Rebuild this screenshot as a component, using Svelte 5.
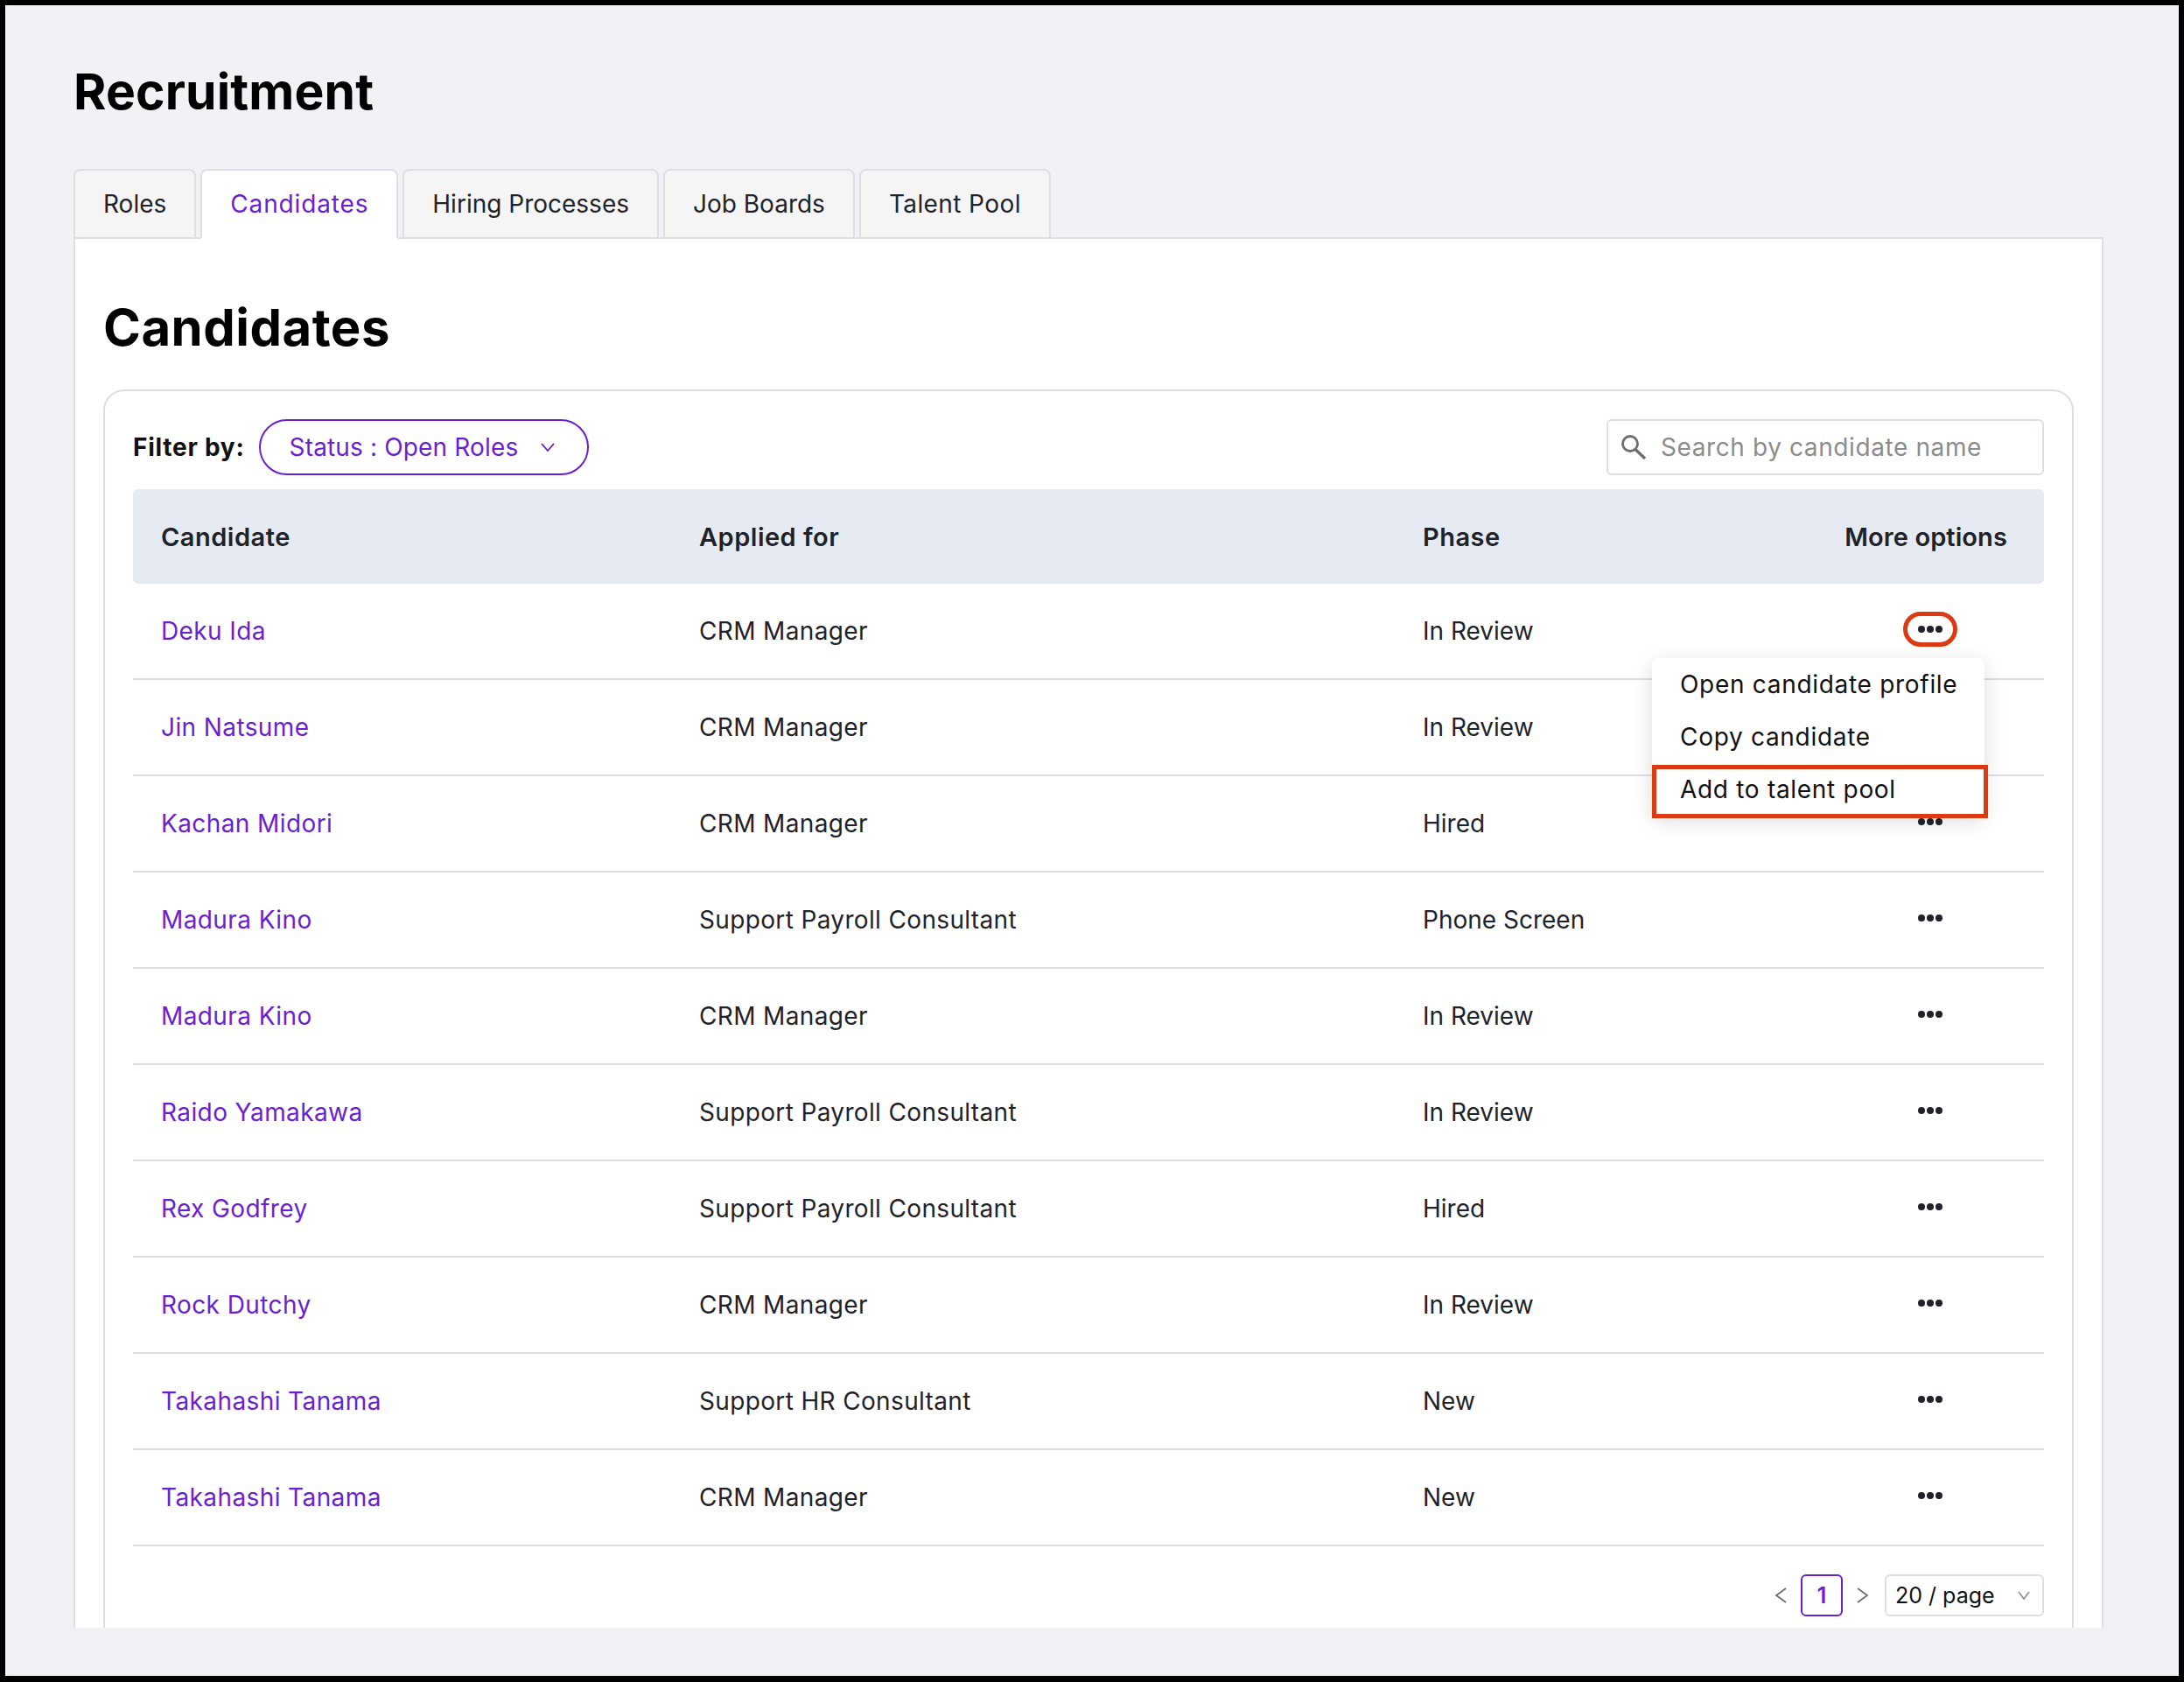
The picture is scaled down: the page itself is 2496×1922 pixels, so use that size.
<script>
    const tabs = ["Roles", "Candidates", "Hiring Processes", "Job Boards", "Talent Pool"];

    const rows = [
        { name: "Deku Ida", role: "CRM Manager", phase: "In Review", open: true },
        { name: "Jin Natsume", role: "CRM Manager", phase: "In Review" },
        { name: "Kachan Midori", role: "CRM Manager", phase: "Hired" },
        { name: "Madura Kino", role: "Support Payroll Consultant", phase: "Phone Screen" },
        { name: "Madura Kino", role: "CRM Manager", phase: "In Review" },
        { name: "Raido Yamakawa", role: "Support Payroll Consultant", phase: "In Review" },
        { name: "Rex Godfrey", role: "Support Payroll Consultant", phase: "Hired" },
        { name: "Rock Dutchy", role: "CRM Manager", phase: "In Review" },
        { name: "Takahashi Tanama", role: "Support HR Consultant", phase: "New" },
        { name: "Takahashi Tanama", role: "CRM Manager", phase: "New" }
    ];
</script>

<div class="frame">
    <h1>Recruitment</h1>

    <nav class="tabs">
        {#each tabs as tab}
            <button class="tab" class:active={tab === "Candidates"}>{tab}</button>
        {/each}
    </nav>

    <section class="panel">
        <h2>Candidates</h2>

        <div class="card">
            <div class="toolbar">
                <span class="filter-label">Filter by:</span>
                <button class="pill">
                    Status : Open Roles
                    <svg width="16" height="10" viewBox="0 0 16 10" fill="none" stroke="currentColor" stroke-width="1.8"><path d="M1 1l7 8 7-8" /></svg>
                </button>
                <div class="search">
                    <svg width="30" height="28" viewBox="0 0 30 28" fill="none" stroke="#6e6e6e" stroke-width="2.8"><circle cx="11" cy="10" r="8.5" /><path d="M17 16.5l11 10.5" stroke-width="3.4" /></svg>
                    <span>Search by candidate name</span>
                </div>
            </div>

            <div class="row head">
                <span>Candidate</span>
                <span>Applied for</span>
                <span>Phase</span>
                <span class="more-head">More options</span>
            </div>

            {#each rows as row}
                <div class="row">
                    <a href="#top" class="name">{row.name}</a>
                    <span class="role">{row.role}</span>
                    <span>{row.phase}</span>
                    <button class="dots" class:ringed={row.open} aria-label="More options">
                        <svg width="28" height="10" viewBox="0 0 28 10" fill="#1f2329"><circle cx="4" cy="5" r="4" /><circle cx="14" cy="5" r="4" /><circle cx="24" cy="5" r="4" /></svg>
                    </button>
                    {#if row.open}
                        <ul class="menu">
                            <li>Open candidate profile</li>
                            <li>Copy candidate</li>
                            <li class="marked">Add to talent pool</li>
                        </ul>
                    {/if}
                </div>
            {/each}

            <div class="pager">
                <svg width="14" height="18" viewBox="0 0 14 18" fill="none" stroke="#6e6e6e" stroke-width="1.8"><path d="M13 1L2 9l11 8" /></svg>
                <span class="page">1</span>
                <svg width="14" height="18" viewBox="0 0 14 18" fill="none" stroke="#6e6e6e" stroke-width="1.8"><path d="M1 1l11 8-11 8" /></svg>
                <div class="size">
                    20 / page
                    <svg width="14" height="10" viewBox="0 0 14 10" fill="none" stroke="#8c8c8c" stroke-width="1.6"><path d="M1 1l6 8 6-8" /></svg>
                </div>
            </div>
        </div>
    </section>
</div>

<style>
    :global(body) {
        background: #000;
    }

    .frame {
        box-sizing: border-box;
        width: 2496px;
        height: 1922px;
        border: 6px solid #000;
        border-bottom-width: 7px;
        background: #f0f2f5;
        padding: 63px 86px 55px 78px;
        display: flex;
        flex-direction: column;
        overflow: hidden;
        font-family: Inter, "Noto Sans", sans-serif;
        font-size: 28px;
        color: #1f2329;
    }

    h1 {
        margin: 0 0 52px;
        font-size: 57px;
        line-height: 72px;
        font-weight: 700;
        color: #000;
        letter-spacing: 0.15px;
    }

    .tabs {
        display: flex;
        gap: 5px;
        margin-bottom: -2px;
        position: relative;
        z-index: 1;
    }

    .tab {
        box-sizing: border-box;
        height: 80px;
        padding: 0 32px;
        border: 2px solid #dcdfe3;
        border-radius: 8px 8px 0 0;
        background: #f5f5f5;
        font: inherit;
        color: #1f2329;
    }

    .tab.active {
        background: #fff;
        border-bottom-color: #fff;
        color: #6a1fd0;
        letter-spacing: 0.85px;
    }

    .tab:last-child {
        letter-spacing: 0.4px;
    }

    .panel {
        flex: 1;
        min-height: 0;
        overflow: hidden;
        background: #fff;
        border: 2px solid #dcdfe3;
        border-bottom: 0;
        padding: 65px 32px 0;
    }

    h2 {
        margin: 0 0 35px;
        font-size: 58px;
        line-height: 72px;
        font-weight: 700;
        color: #000;
        letter-spacing: 0.5px;
    }

    .card {
        border: 2px solid #dcdfe3;
        border-radius: 24px;
        padding: 32px 32px 100px;
    }

    .toolbar {
        display: flex;
        align-items: center;
        height: 64px;
        margin-bottom: 16px;
    }

    .filter-label {
        font-weight: 700;
        color: #111;
        margin-right: 16px;
        letter-spacing: 0.75px;
    }

    .pill {
        box-sizing: border-box;
        height: 64px;
        width: 377px;
        padding: 0 37px 0 33px;
        display: flex;
        align-items: center;
        justify-content: space-between;
        border: 2px solid #6a1fd0;
        border-radius: 32px;
        background: #fff;
        color: #6a1fd0;
        font: inherit;
        letter-spacing: 0.15px;
    }

    .search {
        box-sizing: border-box;
        margin-left: auto;
        width: 500px;
        height: 64px;
        padding: 0 16px 0 14px;
        display: flex;
        align-items: center;
        gap: 16px;
        border: 2px solid #dcdfe3;
        border-radius: 6px;
        color: #8c8c8c;
        letter-spacing: 0.6px;
    }

    .row {
        position: relative;
        display: grid;
        grid-template-columns: 615px 827px 1fr auto;
        align-items: center;
        box-sizing: border-box;
        height: 110px;
        padding-left: 32px;
        border-bottom: 2px solid #dcdfe3;
    }

    .row.head {
        height: 108px;
        padding-right: 42px;
        border: 0;
        border-radius: 6px;
        background: #e6eaf2;
        font-size: 29px;
        font-weight: 600;
        letter-spacing: 0.5px;
    }

    .row.head .more-head {
        letter-spacing: 0.1px;
    }

    .name {
        color: #6a1fd0;
        text-decoration: none;
        letter-spacing: 0.4px;
    }

    .role {
        letter-spacing: 0.35px;
    }

    .dots {
        box-sizing: content-box;
        display: flex;
        margin: -4px 116px 0 0;
        padding: 0;
        border: 0;
        background: none;
    }

    .dots.ringed {
        padding: 10px 12px;
        margin: -4px 99px 0 0;
        border: 5px solid #dc3a12;
        border-radius: 20px;
    }

    .menu {
        position: absolute;
        z-index: 2;
        top: 85px;
        right: 68px;
        width: 380px;
        margin: 0;
        padding: 0;
        list-style: none;
        background: #fff;
        border-radius: 6px;
        box-shadow: 0 6px 24px rgba(0, 0, 0, 0.14);
        color: #111;
        letter-spacing: 0.7px;
    }

    .menu li {
        position: relative;
        height: 60px;
        line-height: 60px;
        padding-left: 32px;
    }

    .menu .marked::after {
        content: "";
        position: absolute;
        top: 2px;
        left: 0;
        right: -4px;
        bottom: -3px;
        border: 5px solid #dc3a12;
    }

    .pager {
        display: flex;
        align-items: center;
        justify-content: flex-end;
        margin-top: 32px;
        height: 48px;
        font-size: 25px;
    }

    .page {
        box-sizing: border-box;
        width: 48px;
        height: 48px;
        margin: 0 16px;
        line-height: 44px;
        text-align: center;
        border: 2px solid #6a1fd0;
        border-radius: 6px;
        color: #6a1fd0;
        font-weight: 600;
    }

    .size {
        box-sizing: border-box;
        width: 182px;
        height: 48px;
        margin-left: 18px;
        padding: 0 14px 0 10px;
        display: flex;
        align-items: center;
        justify-content: space-between;
        border: 2px solid #dcdfe3;
        border-radius: 6px;
        color: #111;
    }
</style>
